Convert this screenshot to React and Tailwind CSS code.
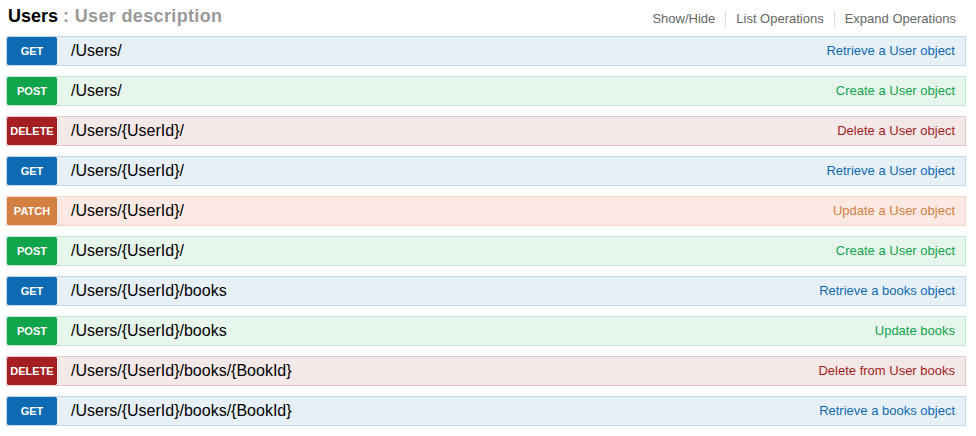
import React from 'react';

const methods = {
  GET: { badge: 'bg-[#0f6ab4]', row: 'bg-[#e7f0f7] border-[#c3d9ec]', text: 'text-[#0f6ab4]' },
  POST: { badge: 'bg-[#10a54a]', row: 'bg-[#e7f6ec] border-[#c3e8d1]', text: 'text-[#10a54a]' },
  DELETE: { badge: 'bg-[#a41e22]', row: 'bg-[#f5e8e8] border-[#e8c6c7]', text: 'text-[#a41e22]' },
  PATCH: { badge: 'bg-[#d38042]', row: 'bg-[#fce9e3] border-[#f5d5c3]', text: 'text-[#d38042]' },
};

const operations = [
  { method: 'GET', path: '/Users/', summary: 'Retrieve a User object' },
  { method: 'POST', path: '/Users/', summary: 'Create a User object' },
  { method: 'DELETE', path: '/Users/{UserId}/', summary: 'Delete a User object' },
  { method: 'GET', path: '/Users/{UserId}/', summary: 'Retrieve a User object' },
  { method: 'PATCH', path: '/Users/{UserId}/', summary: 'Update a User object' },
  { method: 'POST', path: '/Users/{UserId}/', summary: 'Create a User object' },
  { method: 'GET', path: '/Users/{UserId}/books', summary: 'Retrieve a books object' },
  { method: 'POST', path: '/Users/{UserId}/books', summary: 'Update books' },
  { method: 'DELETE', path: '/Users/{UserId}/books/{BookId}', summary: 'Delete from User books' },
  { method: 'GET', path: '/Users/{UserId}/books/{BookId}', summary: 'Retrieve a books object' },
];

function OperationRow({ op }) {
  const m = methods[op.method];
  return (
    <li className={`flex items-center h-[30px] border mb-[10px] ${m.row}`}>
      <span
        className={`w-[50px] h-[28px] flex items-center justify-center rounded-[2px] text-white text-[11px] font-bold ${m.badge}`}
      >
        {op.method}
      </span>
      <span className="ml-[14px] text-[16px] text-black flex-1">{op.path}</span>
      <span className={`pr-[10px] text-[13px] ${m.text}`}>{op.summary}</span>
    </li>
  );
}

export default function App() {
  return (
    <div className="font-['Liberation_Sans',Arial,sans-serif] bg-white min-h-[436px] pl-[6px] pr-[10px]">
      {/* Heading */}
      <div className="flex justify-between items-start h-[36px]">
        <h2 className="pl-[2px] pt-[5px] text-[18px] leading-[22px] font-bold text-black">
          Users <span className="text-[#999] tracking-[0.35px]">: User description</span>
        </h2>
        <ul className="flex pt-[11px] text-[13px] leading-[16px] text-[#666]">
          <li className="px-[10px] border-r border-[#ddd]">Show/Hide</li>
          <li className="px-[10px] border-r border-[#ddd]">List Operations</li>
          <li className="pl-[10px] pr-[10px]">Expand Operations</li>
        </ul>
      </div>

      {/* Operations */}
      <ul>
        {operations.map((op, i) => (
          <OperationRow key={i} op={op} />
        ))}
      </ul>
    </div>
  );
}
